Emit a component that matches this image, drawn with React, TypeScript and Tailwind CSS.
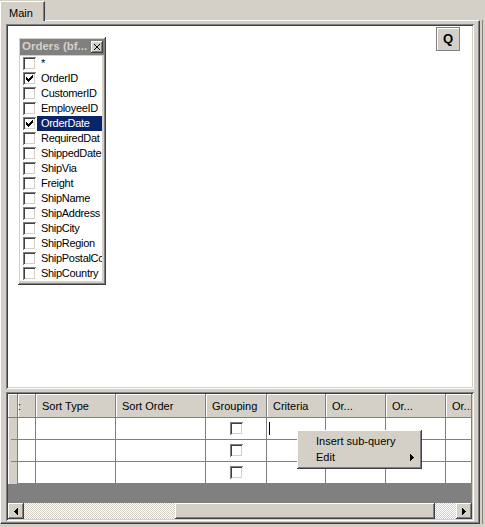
const raised =
  "shadow-[inset_-1px_-1px_#404040,inset_1px_1px_#ffffff,inset_-2px_-2px_#808080,inset_2px_2px_#d4d0c8]"
const sunken =
  "shadow-[inset_1px_1px_#808080,inset_-1px_-1px_#ffffff,inset_2px_2px_#404040,inset_-2px_-2px_#d4d0c8]"
const checker =
  "bg-[repeating-conic-gradient(#d4d0c8_0%_25%,#ffffff_0%_50%)] bg-[length:2px_2px]"

// names as far as the narrow table window shows them
const fields = [
  { name: "*", checked: false },
  { name: "OrderID", checked: true },
  { name: "CustomerID", checked: false },
  { name: "EmployeeID", checked: false },
  { name: "OrderDate", checked: true, selected: true },
  { name: "RequiredDat", checked: false },
  { name: "ShippedDate", checked: false },
  { name: "ShipVia", checked: false },
  { name: "Freight", checked: false },
  { name: "ShipName", checked: false },
  { name: "ShipAddress", checked: false },
  { name: "ShipCity", checked: false },
  { name: "ShipRegion", checked: false },
  { name: "ShipPostalCo", checked: false },
  { name: "ShipCountry", checked: false },
]

const columns = [
  { title: "", width: "w-[10px]" },
  { title: ":", width: "w-[18px]" },
  { title: "Sort Type", width: "w-[80px]" },
  { title: "Sort Order", width: "w-[90px]" },
  { title: "Grouping", width: "w-[61px]" },
  { title: "Criteria", width: "w-[59px]" },
  { title: "Or...", width: "w-[60px]" },
  { title: "Or...", width: "w-[60px]" },
  { title: "Or...", width: "w-[26px]" },
]

function CheckBox({ checked }: { checked?: boolean }) {
  return (
    <span
      className={`w-[13px] h-[13px] bg-white ${sunken} flex items-center justify-center shrink-0`}
    >
      {checked && (
        <svg width="7" height="7" viewBox="0 0 7 7" shapeRendering="crispEdges">
          <path d="M0 2h1v1h1v1h1v-1h1v-1h1v-1h1v-1h1v3h-1v1h-1v1h-1v1h-1v1h-1v-1h-1v-1h-1z" fill="#000" />
        </svg>
      )}
    </span>
  )
}

function Arrow({ dir }: { dir: "left" | "right" }) {
  return (
    <svg width="4" height="7" viewBox="0 0 4 7" shapeRendering="crispEdges">
      {dir === "left" ? (
        <path d="M3 0h1v7h-1v-1h-1v-1h-1v-1h-1v-1h1v-1h1v-1h1z" fill="#000" />
      ) : (
        <path d="M0 0h1v1h1v1h1v1h1v1h-1v1h-1v1h-1v1h-1z" fill="#000" />
      )}
    </svg>
  )
}

function FieldsWindow() {
  return (
    <div
      className={`absolute left-[10px] top-[11px] w-[88px] h-[248px] bg-[#d4d0c8] ${raised} p-[2px] flex flex-col`}
    >
      <div className="h-[16px] bg-[#808080] flex items-center justify-between pl-[2px] pr-[1px]">
        <span className="font-bold text-[11.5px] text-[#d4d0c8] leading-none whitespace-nowrap">
          Orders (bf...
        </span>
        <span className={`w-[12px] h-[12px] bg-[#d4d0c8] ${raised} flex items-center justify-center`}>
          <svg width="6" height="6" viewBox="0 0 6 6" shapeRendering="crispEdges">
            <path d="M0 0h1v1h1v1h2v-1h1v-1h1v1h-1v1h-1v2h1v1h1v1h-1v-1h-1v-1h-2v1h-1v1h-1v-1h1v-1h1v-2h-1v-1h-1z" fill="#000" />
          </svg>
        </span>
      </div>
      <div className="mt-[1px] w-[82px] h-[225px] overflow-hidden bg-white tracking-[-0.3px]">
        {fields.map((f) => (
          <div key={f.name} className="h-[15px] flex items-center pl-[3px] whitespace-nowrap">
            <CheckBox checked={f.checked} />
            <span
              className={`ml-[1px] h-[15px] flex-1 pl-[4px] flex items-center ${
                f.selected ? "bg-[#0a246a] text-white" : ""
              }`}
            >
              {f.name}
            </span>
          </div>
        ))}
      </div>
    </div>
  )
}

function Grid() {
  return (
    <div className="flex-1 flex flex-col bg-white">
      <div className="h-[24px] flex bg-[#d4d0c8] border-b border-[#808080]">
        {columns.map((c, i) => (
          <div
            key={i}
            className={`${c.width} shrink-0 h-full flex items-center pt-[2px] overflow-hidden whitespace-nowrap border-r border-[#808080] shadow-[inset_1px_1px_#ffffff] ${
              i === 1 ? "pl-0" : "pl-[6px]"
            }`}
          >
            {c.title}
          </div>
        ))}
      </div>
      {[0, 1, 2].map((r) => (
        <div key={r} className="h-[22px] flex">
          {columns.map((c, i) =>
            i === 0 ? (
              <div
                key={i}
                className={`${c.width} shrink-0 h-full bg-[#d4d0c8] border-r border-[#808080] shadow-[inset_1px_0_#ffffff] flex items-end`}
              >
                {r < 2 && <div className="ml-[3px] w-[6px] h-[1px] bg-[#808080]" />}
              </div>
            ) : (
              <div
                key={i}
                className={`${c.width} shrink-0 h-full border-r border-b border-[#808080] flex items-center ${
                  i === 4 ? "justify-center" : ""
                }`}
              >
                {i === 4 && <CheckBox />}
                {i === 5 && r === 0 && <span className="ml-[2px] w-[1px] h-[13px] bg-black" />}
              </div>
            )
          )}
        </div>
      ))}
      <div className="h-[19px] bg-[#808080]" />
      <div className="h-[16px] flex">
        <div className={`w-[16px] h-[16px] bg-[#d4d0c8] ${raised} flex items-center justify-center`}>
          <Arrow dir="left" />
        </div>
        <div className={`w-[151px] h-[16px] ${checker}`} />
        <div className={`w-[260px] h-[16px] bg-[#d4d0c8] ${raised}`} />
        <div className={`w-[21px] h-[16px] ${checker}`} />
        <div className={`w-[16px] h-[16px] bg-[#d4d0c8] ${raised} flex items-center justify-center`}>
          <Arrow dir="right" />
        </div>
      </div>
    </div>
  )
}

export default function App() {
  return (
    <div className="relative w-[485px] h-[527px] bg-[#d4d0c8] overflow-hidden text-[11px] text-black font-['Liberation_Sans',Arial,sans-serif]">
      <div className="h-[20px] flex items-end">
        <div className="relative z-10 w-[45px] h-[20px] -mb-[1px] bg-[#d4d0c8] border-l border-t border-white border-r border-r-[#404040] shadow-[inset_-1px_0_#808080] pl-[8px] pt-[3px]">
          Main
        </div>
      </div>
      <div className="flex">
        <div className="w-[480px] h-[504px] border-t border-l border-white border-r border-b border-r-[#404040] border-b-[#404040] shadow-[inset_-1px_-1px_#808080] pt-[3px] pl-[5px] flex flex-col gap-[3px]">
          <div className={`w-[468px] h-[365px] p-[2px] ${sunken}`}>
            <div className="relative w-full h-full bg-white">
              <FieldsWindow />
              <div className="absolute top-[1px] right-[12px] w-[24px] h-[24px] bg-[#d4d0c8] border border-[#808080] shadow-[inset_1px_1px_#ffffff] flex items-center justify-center font-bold text-[13px]">
                Q
              </div>
            </div>
          </div>
          <div className={`w-[468px] h-[129px] p-[2px] flex ${sunken}`}>
            <Grid />
          </div>
        </div>
        <div className="ml-[2px] w-[1px] h-[504px] bg-[#808080]" />
      </div>
      <div
        className={`absolute left-[297px] top-[430px] w-[125px] h-[39px] bg-[#d4d0c8] ${raised} pt-[3px]`}
      >
        <div className="h-[16px] flex items-center pl-[19px]">Insert sub-query</div>
        <div className="h-[16px] flex items-center pl-[19px] justify-between pr-[8px]">
          <span>Edit</span>
          <Arrow dir="right" />
        </div>
      </div>
    </div>
  )
}
